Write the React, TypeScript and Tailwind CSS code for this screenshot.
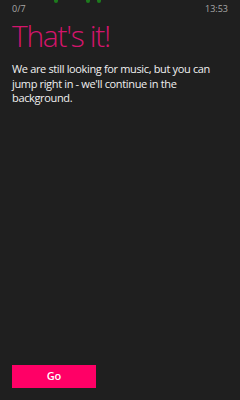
export default function App() {
  return (
    <div
      className="w-[240px] h-[400px] bg-[#1f1f1f] flex flex-col relative overflow-hidden"
      style={{ fontFamily: '"Open Sans", "Noto Sans", sans-serif' }}
    >
      <div className="absolute top-0 left-[54px] w-[4px] h-[3px] rounded-b-full bg-[#1d7a1d]" />
      <div className="absolute top-0 left-[86px] w-[4px] h-[3px] rounded-b-full bg-[#1d7a1d]" />
      <div className="absolute top-0 left-[97px] w-[4px] h-[3px] rounded-b-full bg-[#1d7a1d]" />
      <div className="flex justify-between px-[12px] pt-[3px] h-[16px] text-[9px] leading-[12px] text-[#a8a8a8]">
        <span>0/7</span>
        <span>13:53</span>
      </div>
      <div className="px-[12px] mt-[1px] text-[30px] leading-[38px] font-light text-[#d4156c] tracking-[-1.3px]">
        That's it!
      </div>
      <div className="px-[12px] mt-[7px] text-[11px] leading-[14.5px] text-[#f0f0f0] tracking-[-0.35px]">
        We are still looking for music, but you can jump right in - we'll continue in the background.
      </div>
      <div className="flex-1" />
      <div className="px-[12px] pb-[12px]">
        <button className="w-[84px] h-[23px] bg-[#ff0066] text-white text-[11px] font-semibold flex items-center justify-center">
          Go
        </button>
      </div>
    </div>
  );
}
